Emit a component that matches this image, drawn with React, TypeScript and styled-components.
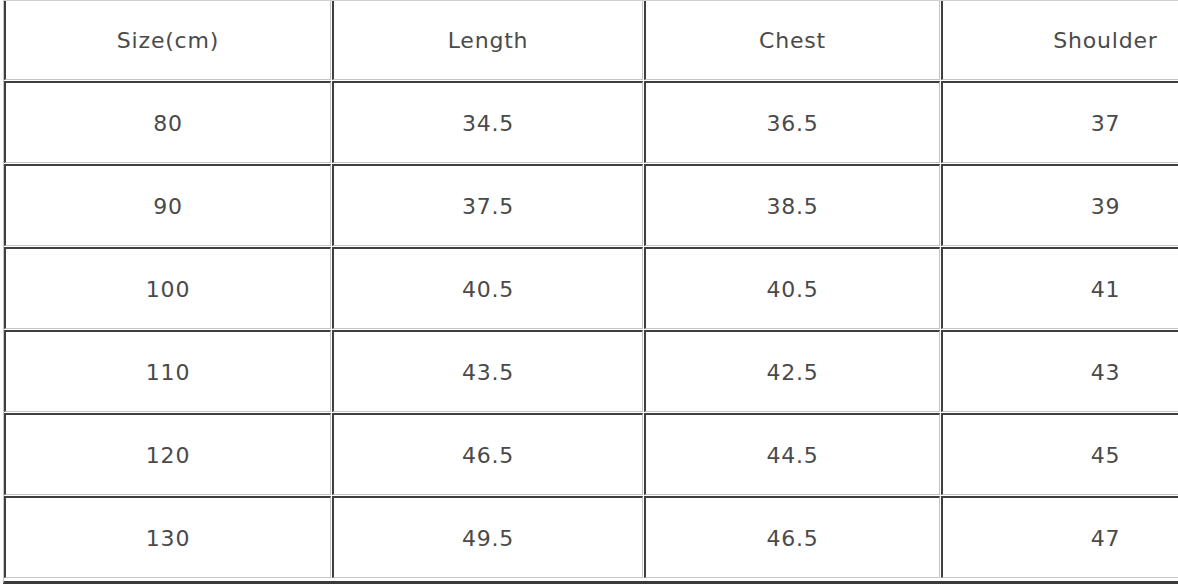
import React from "react";
import styled, { createGlobalStyle } from "styled-components";

const Global = createGlobalStyle`
  html, body { margin: 0; padding: 0; background: #ffffff; }
  body { overflow: hidden; width: 1178px; height: 585px; }
`;

const Page = styled.div`
  width: 1178px;
  height: 585px;
  overflow: hidden;
  background: #ffffff;
`;

const Table = styled.div`
  display: grid;
  grid-template-columns: 327px 311px 296px 328px;
  column-gap: 1px;
  row-gap: 1px;
  width: max-content;
  margin-left: 3px;
  border-left: 1px solid #c6c6c6;
  border-top: 1px solid #d0d0d0;
  border-bottom: 3px solid #3a3a3a;
  padding-bottom: 3px;
  font-family: "DejaVu Sans", Verdana, sans-serif;
  font-size: 22px;
  letter-spacing: 0.8px;
  color: #4a4a4a;
`;

const Cell = styled.div<{ $first?: boolean }>`
  box-sizing: border-box;
  height: ${(p) => (p.$first ? 79 : 82)}px;
  display: flex;
  align-items: center;
  justify-content: center;
  border-left: 2px solid #3f3f3f;
  border-top: ${(p) => (p.$first ? "none" : "2px solid #3f3f3f")};
  border-right: 1px solid #c4c4c4;
  border-bottom: 1px solid #c4c4c4;
  background: #ffffff;
  padding-top: ${(p) => (p.$first ? 0 : 1)}px;
`;

const headers = ["Size(cm)", "Length", "Chest", "Shoulder"];
const rows = [
  ["80", "34.5", "36.5", "37"],
  ["90", "37.5", "38.5", "39"],
  ["100", "40.5", "40.5", "41"],
  ["110", "43.5", "42.5", "43"],
  ["120", "46.5", "44.5", "45"],
  ["130", "49.5", "46.5", "47"],
];

export default function App() {
  return (
    <Page>
      <Global />
      <Table>
        {headers.map((h) => (
          <Cell key={h} $first>
            {h}
          </Cell>
        ))}
        {rows.map((r, i) =>
          r.map((v, j) => <Cell key={`${i}-${j}`}>{v}</Cell>)
        )}
      </Table>
    </Page>
  );
}
